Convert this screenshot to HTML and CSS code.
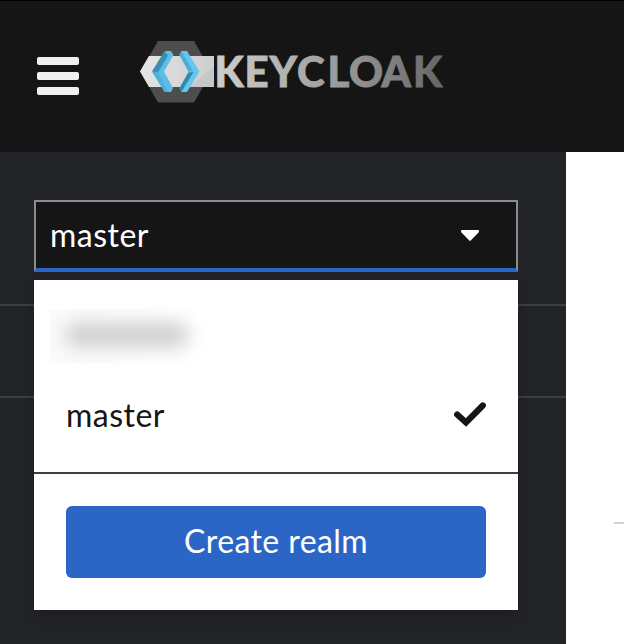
FILE: index.html
```html
<!DOCTYPE html>
<html lang="en">
<head>
<meta charset="utf-8">
<title>Keycloak</title>
<link rel="stylesheet" href="styles.css">
</head>
<body>
<header class="masthead">
  <button class="nav-toggle" aria-label="Navigation"><span></span><span></span><span></span></button>
  <svg class="brand" width="306" height="64" viewBox="139 40 306 64" role="img">
    <defs>
      <linearGradient id="steel" gradientUnits="userSpaceOnUse" x1="140" y1="0" x2="444" y2="0">
        <stop offset="0" stop-color="#e4e4e4"/><stop offset=".25" stop-color="#cdcdcd"/>
        <stop offset=".5" stop-color="#b0b0b0"/><stop offset=".75" stop-color="#8c8c8c"/>
        <stop offset="1" stop-color="#666"/>
      </linearGradient>
    </defs>
    <path fill="#4d4d4d" d="M158 41h36l17.500 30.500L194 102.500h-36L140.500 71.500z"/>
    <path fill="url(#steel)" d="M149 56h65v31h-65l-9-15.500z"/>
    <path fill="#e8e8e8" opacity=".5" d="M149 56h25l-16 15.500h-18z"/>
    <path fill="#b8b8b8" opacity=".4" d="M214 67v20h-24l8-8z"/>
    <path fill="#5cbde6" d="M165.500 51h5.500l2.500 4-9.500 16.500L173 88l-2 4h-5.500L152 71.500z"/>
    <path fill="#3c8fb0" d="M164.500 51l3.500 4.500-10 17-6-1z"/>
    <path fill="#4fb2dc" d="M152 71.500l6 1L168 92h-3.500z"/>
    <path fill="#65c6ee" d="M181.500 51h5.500l12.500 20.500L187 92h-5.500l-2-4 9-16.500-9-16.500z"/>
    <path fill="#4aaed8" d="M181.500 51l-2 4 9 16.500 4.500-.5z"/>
    <path fill="#348aab" d="M188.500 72.500l5-.5-12 20-2-4z"/>
    <text class="wordmark" y="87" x="214.500 244.500 269.500 297 327.500 349 381.500 413" fill="url(#steel)" stroke="url(#steel)">KEYCLOAK</text>
  </svg>
</header>
<div class="page">
  <aside class="sidebar">
    <div class="realm-selector">
      <button class="toggle"><span>master</span>
        <svg width="20" height="12" viewBox="0 0 20 12"><path fill="#fff" d="M2 0h16q2 .5.500 2.500L11 10.300q-1 1-2 0L1.500 2.500Q0 .5 2 0z"/></svg>
      </button>
      <div class="menu">
        <div class="redacted"><i></i></div>
        <div class="option"><span>master</span>
          <svg width="32" height="26" viewBox="0 0 32 26"><path fill="none" stroke="#151515" stroke-width="6.200" stroke-linejoin="miter" stroke-linecap="round" d="M3.200 13.500L12 21.500 28.800 4.500"/></svg>
        </div>
        <div class="footer"><button class="create">Create realm</button></div>
      </div>
    </div>
    <nav class="nav"><div class="nav-row"></div></nav>
  </aside>
  <main class="content"><hr></main>
</div>
</body>
</html>
```
FILE: styles.css
```css
* { box-sizing: border-box; }
body {
  margin: 0;
  height: 644px;
  overflow: hidden;
  background: #fff;
  font: 32px/48px Lato, "Open Sans", sans-serif;
}
button { font: inherit; border: 0; padding: 0; }
.masthead {
  height: 152px;
  display: flex;
  align-items: flex-start;
  padding: 40px 0 0 37px;
  background: #151515;
  border-top: 1px solid #000;
}
.nav-toggle {
  width: 42px;
  margin: 16px 60px 0 0;
  display: flex;
  flex-direction: column;
  gap: 7px;
  background: none;
}
.nav-toggle span { height: 8px; border-radius: 2px; background: #f0eff1; }
.brand { display: block; margin-top: -1px; }
.wordmark { font: 900 42px Lato, sans-serif; stroke-width: .8px; }
.page { display: flex; height: 492px; }
.sidebar { width: 566px; padding-top: 48px; background: #222428; }
.realm-selector { position: relative; width: 484px; margin-left: 34px; }
.toggle {
  width: 100%;
  height: 72px;
  padding: 0 36px 0 14px;
  display: flex;
  align-items: center;
  justify-content: space-between;
  border: 2px solid #8a8d90;
  border-bottom: 4px solid #2b66c6;
  background: #151515;
  color: #fff;
  letter-spacing: .5px;
}
.toggle svg { margin-top: 2px; }
.menu {
  position: absolute;
  top: 80px;
  left: 0;
  width: 484px;
  height: 330px;
  padding-top: 30px;
  background: #fff;
  box-shadow: 0 6px 14px rgba(0, 0, 0, .18);
  color: #151515;
}
.redacted {
  width: 158px;
  height: 53px;
  margin-left: 16px;
  padding: 13px 0 0 16px;
  background: linear-gradient(90deg, #fafafa, #fff);
}
.redacted i {
  display: block;
  width: 122px;
  height: 24px;
  border-radius: 10px;
  background: #cecece;
  filter: blur(9px);
}
.option {
  height: 109px;
  padding: 28px 32px 0;
  display: flex;
  justify-content: space-between;
  letter-spacing: .5px;
}
.option svg { margin-top: 10px; }
.footer { height: 138px; padding: 32px; border-top: 2px solid #3c3f42; }
.create {
  width: 100%;
  height: 72px;
  padding-bottom: 2px;
  border-radius: 6px;
  background: #2b66c6;
  color: #fff;
  letter-spacing: .4px;
}
.nav { margin-top: 32px; border-top: 2px solid #3c3f42; }
.nav-row { height: 92px; border-bottom: 2px solid #3c3f42; }
.content { flex: 1; padding: 370px 0 0 48px; }
.content hr { margin: 0; border: 0; height: 2px; background: #d2d2d2; }
```
